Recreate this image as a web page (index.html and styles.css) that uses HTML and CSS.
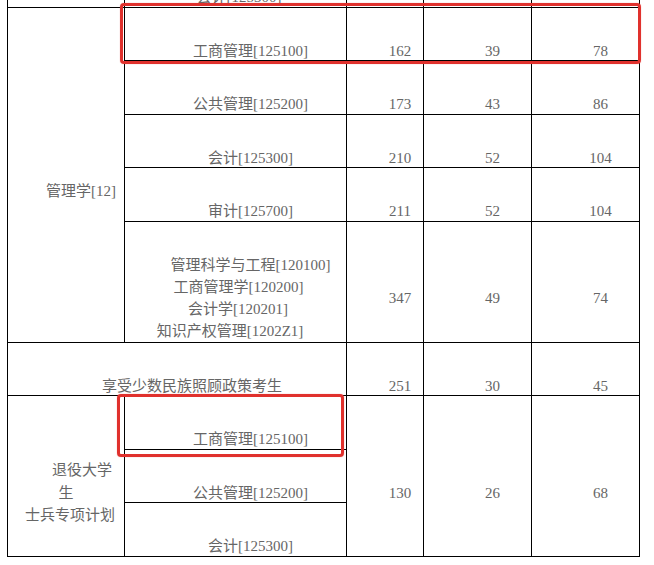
FILE: index.html
```html
<!DOCTYPE html>
<html lang="zh-CN">
<head>
<meta charset="utf-8">
<title>招生计划</title>
<link rel="stylesheet" href="styles.css">
</head>
<body>
<div class="page">
  <table class="grid">
    <colgroup>
      <col class="c1"><col class="c2"><col class="c3"><col class="c4"><col class="c5">
    </colgroup>
    <tbody>
      <tr>
        <td></td>
        <td><span class="ln ln-top">会计[125300]</span></td>
        <td></td><td></td><td></td>
      </tr>
      <tr>
        <td rowspan="5">管理学[12]</td>
        <td>工商管理[125100]</td><td>162</td><td>39</td><td>78</td>
      </tr>
      <tr>
        <td>公共管理[125200]</td><td>173</td><td>43</td><td>86</td>
      </tr>
      <tr>
        <td>会计[125300]</td><td>210</td><td>52</td><td>104</td>
      </tr>
      <tr>
        <td>审计[125700]</td><td>211</td><td>52</td><td>104</td>
      </tr>
      <tr>
        <td class="multi">
          <span class="ln">管理科学与工程[120100]</span>
          <span class="ln ln-b">工商管理学[120200]</span>
          <span class="ln ln-c">会计学[120201]</span>
          <span class="ln ln-d">知识产权管理[1202Z1]</span>
        </td>
        <td>347</td><td>49</td><td>74</td>
      </tr>
      <tr>
        <td colspan="2">享受少数民族照顾政策考生</td><td>251</td><td>30</td><td>45</td>
      </tr>
      <tr>
        <td rowspan="3" class="veteran">
          <span class="ln vet-1">退役大学</span>
          <span class="ln vet-2">生</span>
          <span class="ln">士兵专项计划</span>
        </td>
        <td>工商管理[125100]</td>
        <td rowspan="3">130</td><td rowspan="3">26</td><td rowspan="3">68</td>
      </tr>
      <tr>
        <td>公共管理[125200]</td>
      </tr>
      <tr>
        <td>会计[125300]</td>
      </tr>
    </tbody>
  </table>
  <div class="mark mark-a"></div>
  <div class="mark mark-b"></div>
</div>
</body>
</html>
```
FILE: styles.css
```css
html, body {
  margin: 0;
  padding: 0;
  background: #fff;
}

.page {
  position: relative;
  display: flow-root;
  height: 565px;
  overflow: hidden;
}

.grid {
  margin: -47px 0 0 7px;
  width: 633px;
  table-layout: fixed;
  border-collapse: collapse;
  font-family: "Liberation Serif", "Noto Sans CJK SC", serif;
  font-size: 15px;
  line-height: 18.5px;
  color: #666;
}

.c1 { width: 117px; }
.c2 { width: 222px; }
.c3 { width: 77px; }
.c4 { width: 108px; }
.c5 { width: 108px; }

.grid td {
  border: 1px solid #000;
  padding: 34px 0 0 30px;
  text-align: center;
  vertical-align: middle;
  white-space: nowrap;
}

.ln {
  display: block;
}

.grid td.multi {
  padding-top: 32px;
  line-height: 22px;
}

.ln-top { padding-right: 23px; }
.ln-b { padding-right: 24px; }
.ln-c { padding-right: 25px; }
.ln-d { padding-right: 41px; }

.grid td.veteran {
  padding-left: 8px;
  line-height: 22.5px;
}

.vet-1 { padding-left: 24px; }
.vet-2 { padding-right: 8px; }

.mark {
  position: absolute;
  box-sizing: border-box;
  border: 3px solid #e0312d;
  border-radius: 4px;
  box-shadow: 0 0 1px rgba(224, 49, 45, 0.6);
}

.mark-a {
  left: 120px;
  top: 3px;
  width: 521px;
  height: 61px;
}

.mark-b {
  left: 117px;
  top: 394px;
  width: 227px;
  height: 63px;
}
```
